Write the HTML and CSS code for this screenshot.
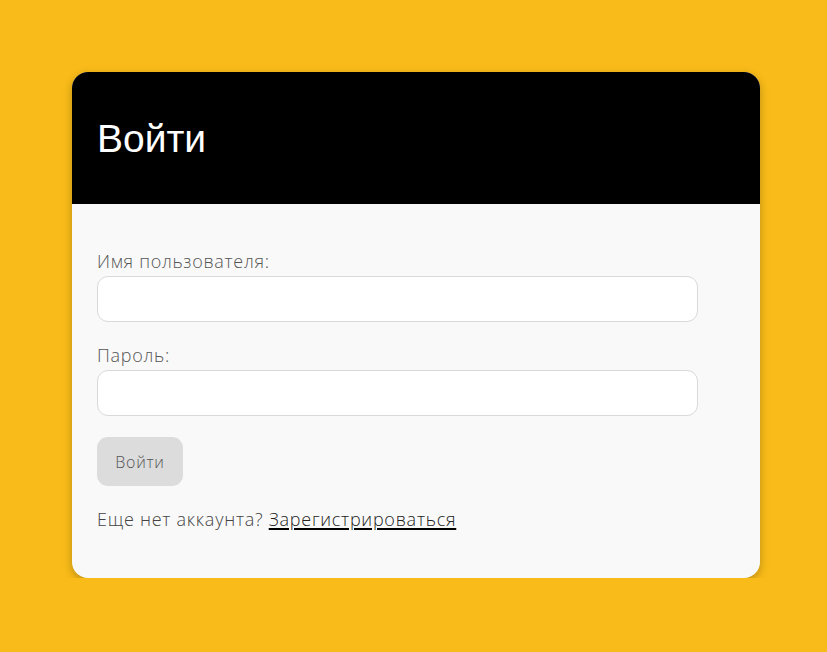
FILE: index.html
```html
<!DOCTYPE html>
<html lang="ru">
<head>
<meta charset="utf-8">
<title>Войти</title>
<link rel="stylesheet" href="styles.css">
</head>
<body>
<div class="card">
  <div class="card-header"><h1 class="title">Войти</h1></div>
  <form class="card-body">
    <label class="label" for="u">Имя пользователя:</label>
    <input class="input" id="u" type="text">
    <label class="label" for="p">Пароль:</label>
    <input class="input" id="p" type="password">
    <button class="btn" type="button">Войти</button>
    <p class="note">Еще нет аккаунта? <a href="#" class="link">Зарегистрироваться</a></p>
  </form>
</div>
</body>
</html>
```
FILE: styles.css
```css
html, body { margin: 0; }
body {
  background: #f9bb19;
  padding: 72px 67px 0 72px;
  font-family: "Open Sans", "Noto Sans", sans-serif;
  font-weight: 300;
}
.card {
  width: 688px;
  background: #f9f9f9;
  border-radius: 16px;
  overflow: hidden;
  box-shadow: 0 3px 8px rgba(0,0,0,0.25);
}
.card-header {
  background: #000;
  height: 132px;
  display: flex;
  align-items: center;
  padding: 0 25px;
}
.title {
  margin: 0;
  color: #fff;
  font-family: "Liberation Sans", Arial, sans-serif;
  font-weight: 400;
  font-size: 39px;
  line-height: 1;
}
.card-body {
  display: flex;
  flex-direction: column;
  align-items: flex-start;
  padding: 45px 25px 47px;
}
.label {
  display: block;
  font-size: 18px;
  line-height: 24px;
  letter-spacing: 0.7px;
  color: #555;
  margin-bottom: 3px;
}
.input {
  box-sizing: border-box;
  width: 601px;
  height: 46px;
  border: 1px solid #d9d9d9;
  border-radius: 11px;
  background: #fff;
  margin: 0 0 21px;
  outline: none;
}
.btn {
  width: 86px;
  height: 49px;
  border: none;
  border-radius: 11px;
  background: #dcdcdc;
  color: #555;
  font-family: inherit;
  font-weight: 300;
  font-size: 16px;
  letter-spacing: 0.7px;
  padding: 0;
  margin-bottom: 21px;
}
.note {
  margin: 0;
  font-size: 18px;
  line-height: 24px;
  letter-spacing: 0.75px;
  color: #444;
}
.link {
  color: #222;
  text-decoration: underline;
  text-decoration-color: #000;
  text-decoration-thickness: 2px;
  text-underline-offset: 2px;
}
```
